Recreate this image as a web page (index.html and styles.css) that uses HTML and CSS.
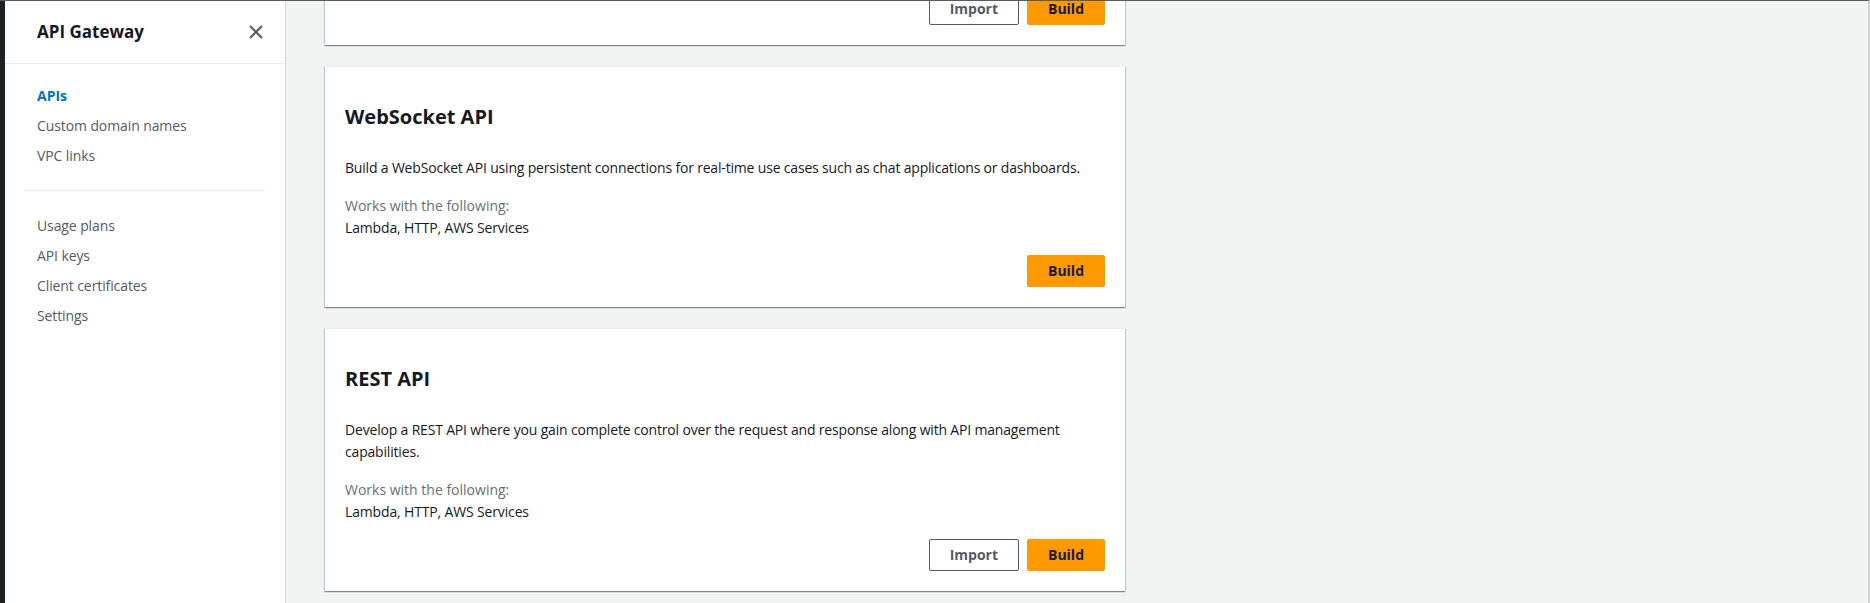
FILE: index.html
```html
<!DOCTYPE html>
<html lang="en">
<head>
<meta charset="utf-8">
<title>API Gateway</title>
<link rel="stylesheet" href="styles.css">
</head>
<body>
<div class="page">
  <div class="edge"></div>
  <nav class="sidebar">
    <div class="side-header">
      <span class="side-title">API Gateway</span>
      <svg class="close" width="14" height="14" viewBox="0 0 14 14"><path d="M1 1 L13 13 M13 1 L1 13" stroke="#545b64" stroke-width="2" fill="none"/></svg>
    </div>
    <ul class="nav-group first">
      <li class="active">APIs</li>
      <li>Custom domain names</li>
      <li>VPC links</li>
    </ul>
    <div class="nav-divider"></div>
    <ul class="nav-group">
      <li>Usage plans</li>
      <li>API keys</li>
      <li>Client certificates</li>
      <li>Settings</li>
    </ul>
  </nav>
  <main class="main">
    <div class="cards">
      <section class="card card-partial">
        <div class="card-footer">
          <button class="btn btn-normal">Import</button>
          <button class="btn btn-primary">Build</button>
        </div>
      </section>
      <section class="card">
        <h2 class="card-title">WebSocket API</h2>
        <p class="card-desc">Build a WebSocket API using persistent connections for real-time use cases such as chat applications or dashboards.</p>
        <p class="card-label">Works with the following:</p>
        <p class="card-value">Lambda, HTTP, AWS Services</p>
        <div class="card-footer">
          <button class="btn btn-primary">Build</button>
        </div>
      </section>
      <section class="card">
        <h2 class="card-title">REST API</h2>
        <p class="card-desc">Develop a REST API where you gain complete control over the request and response along with API management capabilities.</p>
        <p class="card-label">Works with the following:</p>
        <p class="card-value">Lambda, HTTP, AWS Services</p>
        <div class="card-footer">
          <button class="btn btn-normal">Import</button>
          <button class="btn btn-primary">Build</button>
        </div>
      </section>
    </div>
  </main>
</div>
</body>
</html>
```
FILE: styles.css
```css
* { box-sizing: border-box; }
html, body { margin: 0; padding: 0; }
body {
  font-family: "Open Sans", "Noto Sans", Arial, sans-serif;
  font-size: 14px;
  color: #16191f;
  background: #f2f3f3;
  overflow: hidden;
}
.page {
  display: flex;
  height: 603px;
  border-top: 1px solid #545b64;
  border-right: 2px solid #cfd3d3;
  overflow: hidden;
}
.edge {
  width: 5px;
  flex: none;
  background: #1d2025;
}
.sidebar {
  width: 281px;
  flex: none;
  background: #ffffff;
  border-right: 1px solid #d5dbdb;
}
.side-header {
  height: 63px;
  border-bottom: 1px solid #eaeded;
  display: flex;
  align-items: center;
  justify-content: space-between;
  padding: 0 22px 0 32px;
}
.side-title {
  font-size: 17px;
  font-weight: 700;
  color: #16191f;
  line-height: 24px;
}
.close { display: block; }
.nav-group {
  list-style: none;
  margin: 0;
  padding: 0 0 0 32px;
}
.nav-group.first { padding-top: 17px; }
.nav-group li {
  line-height: 30px;
  height: 30px;
  color: #545b64;
  font-size: 14px;
  letter-spacing: -0.1px;
}
.nav-group li.active {
  color: #0073bb;
  font-weight: 700;
  letter-spacing: 0;
}
.nav-divider {
  height: 1px;
  background: #eaeded;
  margin: 19px 20px 20px 20px;
}
.main {
  flex: 1;
  overflow: hidden;
  padding: 0 39px;
}
.cards {
  width: 800px;
  margin-top: -29px;
  display: flex;
  flex-direction: column;
  gap: 21px;
}
.card {
  background: #ffffff;
  border-top: 1px solid #eaeded;
  box-shadow: 0 1px 1px 0 rgba(0, 28, 36, 0.3), 1px 1px 1px 0 rgba(0, 28, 36, 0.15), -1px 1px 1px 0 rgba(0, 28, 36, 0.15);
  padding: 36px 20px 20px 20px;
}
.card-partial { padding-top: 20px; }
.card-title {
  margin: 0;
  font-size: 20px;
  line-height: 28px;
  font-weight: 700;
  color: #16191f;
}
.card-desc {
  margin: 26px 0 0 0;
  line-height: 22px;
  font-size: 14px;
  color: #16191f;
  letter-spacing: -0.18px;
}
.card-label {
  margin: 16px 0 0 0;
  line-height: 22px;
  color: #687078;
}
.card-value {
  margin: 0;
  line-height: 22px;
  color: #16191f;
  letter-spacing: -0.15px;
}
.card-footer {
  margin-top: 16px;
  display: flex;
  justify-content: flex-end;
  gap: 8px;
}
.card-partial .card-footer { margin-top: 0; }
.btn {
  height: 32px;
  padding: 0 20px;
  border-radius: 2px;
  font-family: inherit;
  font-size: 14px;
  font-weight: 700;
  line-height: 30px;
  cursor: pointer;
}
.btn-normal {
  background: #ffffff;
  border: 1px solid #545b64;
  color: #545b64;
}
.btn-primary {
  background: #ff9900;
  border: 1px solid #ff9900;
  color: #16191f;
}
```
